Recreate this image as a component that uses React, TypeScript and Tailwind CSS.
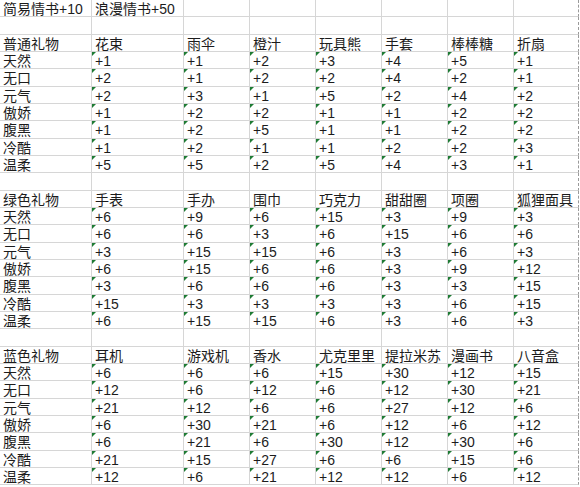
import React from 'react';

type Section = {
  title: string;
  gifts: string[];
  values: number[][];
};

const traits = ['天然', '无口', '元气', '傲娇', '腹黑', '冷酷', '温柔'];

const sections: Section[] = [
  {
    title: '普通礼物',
    gifts: ['花束', '雨伞', '橙汁', '玩具熊', '手套', '棒棒糖', '折扇'],
    values: [
      [1, 1, 2, 3, 4, 5, 1],
      [2, 1, 2, 2, 4, 2, 1],
      [2, 3, 1, 5, 2, 4, 2],
      [1, 2, 2, 1, 1, 2, 2],
      [1, 2, 5, 1, 1, 2, 2],
      [1, 2, 1, 1, 2, 2, 3],
      [5, 5, 2, 5, 4, 3, 1],
    ],
  },
  {
    title: '绿色礼物',
    gifts: ['手表', '手办', '围巾', '巧克力', '甜甜圈', '项圈', '狐狸面具'],
    values: [
      [6, 9, 6, 15, 3, 9, 3],
      [6, 6, 3, 6, 15, 6, 6],
      [3, 15, 15, 6, 3, 6, 3],
      [6, 15, 6, 6, 3, 9, 12],
      [3, 6, 6, 6, 3, 3, 15],
      [15, 3, 3, 3, 3, 6, 15],
      [6, 15, 15, 6, 3, 6, 3],
    ],
  },
  {
    title: '蓝色礼物',
    gifts: ['耳机', '游戏机', '香水', '尤克里里', '提拉米苏', '漫画书', '八音盒'],
    values: [
      [6, 6, 6, 15, 30, 12, 15],
      [12, 6, 12, 6, 12, 30, 21],
      [21, 12, 6, 6, 27, 12, 6],
      [6, 30, 21, 6, 12, 6, 12],
      [6, 21, 6, 30, 12, 30, 6],
      [21, 15, 27, 6, 6, 15, 6],
      [12, 6, 21, 12, 12, 6, 12],
    ],
  },
];

type Cell = { text: string; flag?: boolean };

// build the sheet as a flat list of rows (8 columns each)
const empty = (): Cell[] => Array.from({ length: 8 }, () => ({ text: '' }));

const rows: Cell[][] = [];
rows.push([{ text: '简易情书+10' }, { text: '浪漫情书+50' }, ...empty().slice(2)]);
sections.forEach((s) => {
  rows.push(empty());
  rows.push([{ text: s.title }, ...s.gifts.map((g) => ({ text: g }))]);
  traits.forEach((t, r) => {
    rows.push([{ text: t }, ...s.values[r].map((v) => ({ text: `+${v}`, flag: true }))]);
  });
});

const colWidths = ['w-[92px]', 'w-[92px]', 'w-[66px]', 'w-[66px]', 'w-[66px]', 'w-[66px]', 'w-[66px]', 'w-[65px]'];

const Flag = () => (
  <span className="absolute left-0 top-0 w-0 h-0 border-t-[4px] border-t-[#1e7b34] border-r-[4px] border-r-transparent" />
);

export default function App() {
  return (
    <div
      className="w-[580px] h-[487px] overflow-hidden bg-white text-[14px] text-[#1c1c1c]"
      style={{ fontFamily: '"Liberation Sans", "Noto Sans CJK SC", sans-serif' }}
    >
      {rows.map((row, ri) => (
        <div key={ri} className={`flex ${ri % 3 === 1 ? 'h-[18px]' : 'h-[17px]'}`}>
          {row.map((cell, ci) => (
            <div
              key={ci}
              className={`relative shrink-0 ${colWidths[ci]} border-b border-r border-[#d6d6d6] ${
                ci === 7 ? 'border-r-[#9a9a9a] [border-right-style:dashed]' : ''
              } pl-[3px] pt-[1px] leading-[16px] whitespace-nowrap`}
            >
              {cell.flag && <Flag />}
              {cell.text}
            </div>
          ))}
        </div>
      ))}
    </div>
  );
}
